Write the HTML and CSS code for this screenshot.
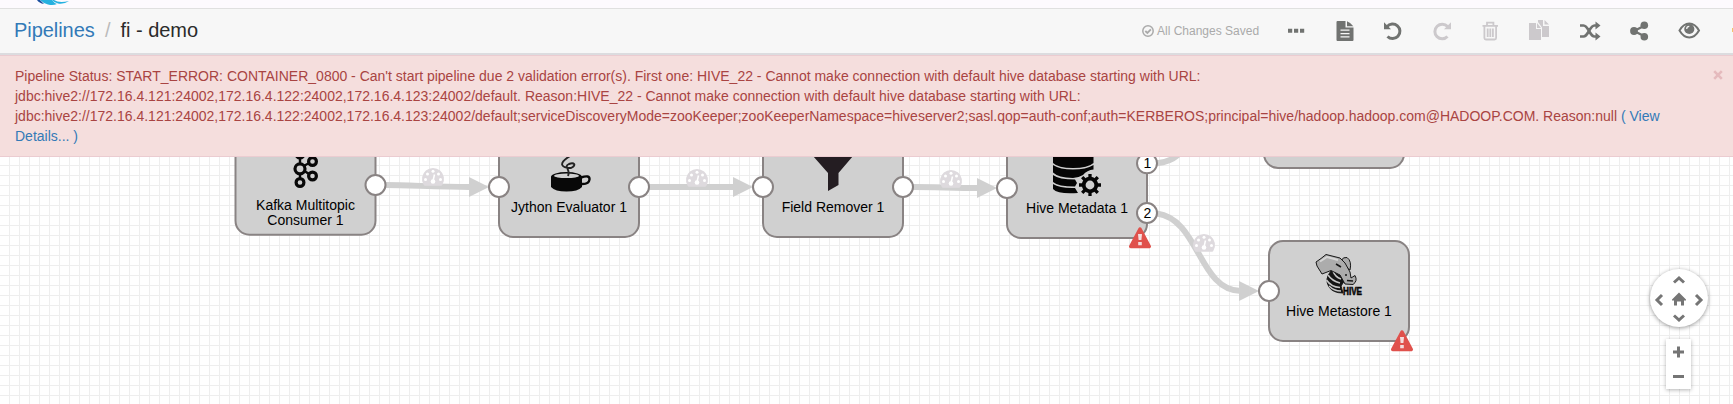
FILE: index.html
```html
<!DOCTYPE html>
<html lang="en">
<head>
<meta charset="utf-8">
<title>fi - demo</title>
<link rel="stylesheet" href="styles.css">
</head>
<body>
<div class="app">
  <div class="navbar">
    <svg class="logo" width="34" height="8" viewBox="0 0 34 8"><path d="M0 0H3L7 4Q2 3 0 0Z" fill="#1c4fa0"/><path d="M3 0H15Q17 3 20 4Q16 5.800 11 4.500Q6 3 3 0Z" fill="#25b1e0"/><path d="M17 0Q22 3.500 32 1Q27 4.500 21 3.500Q17 2.500 15 0Z" fill="#25b1e0"/></svg>
  </div>
  <header class="toolbar">
    <nav class="crumbs"><a>Pipelines</a><span class="slash">/</span><span>fi - demo</span></nav>
    <div class="saved">
      <svg width="12" height="12" viewBox="0 0 12 12" fill="none" stroke="#aaa" stroke-width="1.500"><circle cx="6" cy="6" r="5.200"/><path d="M3.300 6L5.400 8L8.900 4.400" stroke-width="1.900"/></svg>
      <span class="saved-text">All Changes Saved</span>
    </div>
    <div class="tools">
      <svg class="tool" viewBox="0 0 24 24"><path d="M4 9.800h4.200v4H4zM10 9.800h4.200v4H10zM16 9.800h4.200v4H16z"/></svg>
      <svg class="tool" viewBox="0 0 24 24"><path fill-rule="evenodd" d="M3.500 3q0-1 1-1h8v6.500h8V21q0 1-1 1h-15q-1 0-1-1zM7.500 10.500v1.300h9v-1.300zM7.500 13.900v1.300h9v-1.300zM7.500 17.300v1.300h9v-1.300z"/><path d="M14 2.200q4 1.500 6.300 5H14z"/></svg>
      <svg class="tool" viewBox="0 0 24 24"><path d="M6 7.600A7.300 7.300 0 1 1 6.500 17.500" fill="none" stroke="currentColor" stroke-width="3"/><path d="M3 3.300L3 10.300H10z"/></svg>
      <svg class="tool off" viewBox="0 0 24 24"><path d="M17.600 7.600A7.300 7.300 0 1 0 17.500 17.500" fill="none" stroke="currentColor" stroke-width="3"/><path d="M21 3.300L21 10.300H14z"/></svg>
      <svg class="tool off" viewBox="0 0 24 24"><path d="M4.500 6.800H20M9 6V3.700h6.400V6M6.400 7V19q0 1.500 1.500 1.500h8.700q1.500 0 1.500-1.500V7M9.700 9.500v8.500M12.300 9.500v8.500M14.900 9.500v8.500" fill="none" stroke="currentColor" stroke-width="1.800"/></svg>
      <svg class="tool off" viewBox="0 0 24 24"><path d="M2 4h7v6h5v11H2zM10 4l4 5h-4zM11 1h5v6h6v11h-7V8.500L11 3zM17.500 1l4.500 4.500h-4.500z"/></svg>
      <svg class="tool shuffle" viewBox="0 0 24 24"><path d="M2 6.500h3.500c5 0 6 11 11 11H19M2 17.500h3.500c5 0 6-11 11-11H19" fill="none" stroke="currentColor" stroke-width="2.700"/><path d="M17.500 2.500l5 4-5 4zM17.500 13.500l5 4-5 4z"/></svg>
      <svg class="tool" viewBox="0 0 24 24"><path d="M18 6.500L7 12L18 17.500" fill="none" stroke="currentColor" stroke-width="2.400"/><circle cx="17.300" cy="6.200" r="3.800"/><circle cx="7" cy="12" r="3.900"/><circle cx="17.300" cy="17.800" r="3.800"/></svg>
      <svg class="tool eye" viewBox="0 0 24 24"><path d="M2.500 11.600Q6.500 4.600 12.300 4.600T22 11.600Q18 18.600 12.300 18.600T2.500 11.600Z" fill="none" stroke="currentColor" stroke-width="2"/><circle cx="12.300" cy="10" r="5.100"/><path d="M9.700 10q0-2.600 2.600-2.600" fill="none" stroke="#f7f7f7" stroke-width="1.200"/></svg>
    </div>
  </header>
  <div class="edge-dot"></div>
  <div class="alert">
    <svg class="close" width="10" height="10" viewBox="0 0 10 10"><path d="M1.200 1.200L8.800 8.800M8.800 1.200L1.200 8.800" stroke="#e5babd" stroke-width="2.600"/></svg>
    <div>Pipeline Status: START_ERROR: CONTAINER_0800 - Can't start pipeline due 2 validation error(s). First one: HIVE_22 - Cannot make connection with default hive database starting with URL:</div>
    <div>jdbc:hive2://172.16.4.121:24002,172.16.4.122:24002,172.16.4.123:24002/default. Reason:HIVE_22 - Cannot make connection with default hive database starting with URL:</div>
    <div>jdbc:hive2://172.16.4.121:24002,172.16.4.122:24002,172.16.4.123:24002/default;serviceDiscoveryMode=zooKeeper;zooKeeperNamespace=hiveserver2;sasl.qop=auth-conf;auth=KERBEROS;principal=hive/hadoop.hadoop.com@HADOOP.COM. Reason:null <a>( View</a></div>
    <div><a>Details... )</a></div>
  </div>
  <main class="canvas">
    <svg class="graph" width="1733" height="247" viewBox="0 157 1733 247">
      <defs>
        <pattern id="grid" width="10" height="10" patternUnits="userSpaceOnUse"><path d="M9 0h1v10h-1zM0 5h10v1H0z" fill="#eee"/></pattern>
        <g id="gauge"><path d="M-9.500 7.500A11 11 0 1 1 9.500 7.500Q9 8.800 8 8.800H-8Q-9 8.800-9.500 7.500Z" fill="#dedade"/><g fill="#fff"><circle cx="-7.500" cy="2.500" r="1.500"/><circle cx="-5.500" cy="-3" r="1.500"/><circle cx="0" cy="-5.700" r="1.500"/><circle cx="5.500" cy="-3" r="1.500"/><circle cx="7.500" cy="2.500" r="1.500"/><circle cx="0" cy="4.500" r="2.300"/></g><path d="M0 4L1.500-2.500" stroke="#fff" stroke-width="1.500"/></g>
        <g id="warn"><path d="M0-8.500L9.300 9H-9.300Z" fill="#e0514c" stroke="#e0514c" stroke-width="3.500" stroke-linejoin="round"/><path d="M-2-3.500h4l-.6 6h-2.800zM-1.800 4.500h3.600v3.300h-3.600z" fill="#f3dede"/></g>
      </defs>
      <rect class="paper" x="0" y="157" width="1733" height="247"/>
      <rect x="0" y="157" width="1733" height="247" fill="url(#grid)"/>
      <g class="edge">
        <path d="M385 185C410 185 435 187 470 187"/><path d="M649 187H734"/><path d="M913 187C935 187 955 188 978 188"/>
        <path d="M1157 163.300C1166 162.500 1172 160 1178 155"/><path d="M1157 213.500C1199 219 1199 291 1241 291"/>
      </g>
      <g class="arrow"><path d="M469 177l20 10-20 10zM733 177l20 10-20 10zM977 178l20 10-20 10zM1239 281l20 10-20 10z"/></g>
      <use href="#gauge" x="433" y="177"/><use href="#gauge" x="697" y="178"/><use href="#gauge" x="951" y="179"/><use href="#gauge" x="1204" y="243"/>
      <g class="node">
        <rect x="235.500" y="134.700" width="140" height="100" rx="14"/><rect x="499" y="137" width="140" height="100" rx="14"/><rect x="763" y="137" width="140" height="100" rx="14"/><rect x="1007" y="138" width="140" height="100" rx="14"/><rect x="1264" y="68" width="140" height="100" rx="14"/><rect x="1269" y="241" width="140" height="100" rx="14"/>
      </g>
      <g fill="none" stroke="#080808" stroke-width="3.200">
        <path d="M300 156V182M300 168L312 161.500M300 168L312 176" stroke-width="2.400"/><g fill="#d0d0d0"><circle cx="300" cy="154" r="3.900"/><circle cx="300" cy="168.800" r="5"/><circle cx="300" cy="182.500" r="3.900"/><circle cx="312.500" cy="161.500" r="3.900"/><circle cx="312.500" cy="176" r="3.900"/></g>
      </g>
      <g fill="#080808">
        <ellipse cx="566.500" cy="177" rx="15.500" ry="5"/><path d="M551 176.500V187Q555 191.500 566.500 191.500T582 187V176.500Z"/><ellipse cx="566.500" cy="175.800" rx="12.500" ry="2.300" fill="#d0d0d0"/><path d="M581 177.500Q590 174.500 589.500 179.500Q589 184.500 581 184" fill="none" stroke="#080808" stroke-width="2.400"/>
        <path d="M570 156C557 164 562 168 571 168C577 165 574 162 569 164C563 167 571 169 568 176" fill="none" stroke="#222" stroke-width="1.900"/>
      </g>
      <path d="M813 156H853L838.500 173V185L828 191V173Z" fill="#241d22"/>
      <g fill="#050505">
        <path d="M1053 150H1093.500V163Q1088 168 1073 168T1053 163ZM1053 165Q1060 169.500 1073 169.500T1093.500 165V169.500Q1087 170 1083 175Q1078 178 1073 178Q1058 177.500 1053 172.500ZM1053 175Q1059 179.500 1075 179.500L1077 183L1075 186.500Q1058 186.500 1053 182ZM1053 184Q1060 188.500 1075 188L1078 193Q1058 194.500 1053 189Z"/>
        <g transform="translate(1090 185)"><circle r="6.300" fill="none" stroke="#050505" stroke-width="3.800"/><path d="M0-11V-7M0 11V7M-11 0H-7M11 0H7M-7.800-7.800L-5-5M7.800-7.800L5-5M-7.800 7.800L-5 5M7.800 7.800L5 5" stroke="#050505" stroke-width="3.300"/></g>
      </g>
      <g stroke="#171717" stroke-width="1" stroke-linejoin="round">
        <path d="M1331 271Q1324 279 1329 287Q1333 293 1343 293L1341 286L1345 280L1338 271Z" fill="#151515"/>
        <path d="M1328 275Q1332 281 1340 283M1326.500 280Q1331 287 1340 287.500M1329 286Q1334 291 1341 291M1333 271Q1335 277 1341 279" fill="none" stroke="#c6c6c6" stroke-width="1.500"/>
        <path d="M1341 261Q1343 256.500 1347 257.500Q1352 261 1350 270L1344 266Z" fill="#aaa"/>
        <path d="M1317 266L1316 262L1321 258.500L1326 254.500L1340 258L1345 263L1350 272L1351 278L1355 275.500Q1358 281 1353 284.500L1345 284L1340 275L1331 270.500L1322 274Z" fill="#acacac"/>
        <path d="M1320 261.500L1327 257L1338 260" fill="none" stroke="#d6d6d6" stroke-width="2"/><path d="M1336 264L1341 267M1345 275h2M1347 280.500L1353 281" fill="none" stroke-width="1.600"/>
      </g>
      <text class="hive" x="1343" y="295" textLength="19" lengthAdjust="spacingAndGlyphs">HIVE</text>
      <g class="port">
        <circle cx="375.500" cy="185" r="10"/><circle cx="499" cy="187" r="10"/><circle cx="639" cy="187" r="10"/><circle cx="763" cy="187" r="10"/><circle cx="903" cy="187" r="10"/><circle cx="1007" cy="188" r="10"/><circle cx="1147" cy="163.300" r="10"/><circle cx="1147" cy="213" r="10"/><circle cx="1269" cy="291" r="10"/>
      </g>
      <g class="label">
        <text x="305.500" y="210">Kafka Multitopic</text><text x="305.500" y="225">Consumer 1</text><text x="569" y="212">Jython Evaluator 1</text><text x="833" y="212">Field Remover 1</text><text x="1077" y="213">Hive Metadata 1</text><text x="1339" y="316">Hive Metastore 1</text><text x="1147.500" y="168">1</text><text x="1147.500" y="218">2</text>
      </g>
      <use href="#warn" x="1140" y="237.500"/><use href="#warn" x="1402" y="340.500"/>
    </svg>
    <div class="controls">
      <svg class="pan" width="58" height="58" viewBox="0 0 58 58"><g fill="none" stroke="#757575" stroke-width="3"><path d="M24 13.500L29 9L34 13.500M24 46.500L29 51L34 46.500M12 26L7 31L12 36M46 26L51 31L46 36"/></g><path d="M22 30.500L29 23.500L36 30.500V31.500H34V36.500H31V32.500H27V36.500H24V31.500H22Z" fill="#757575"/></svg>
      <svg class="zoom" width="25" height="50" viewBox="0 0 25 50" fill="#757575"><path d="M11 7.500h3v4h4v3h-4v4h-3v-4H7v-3h4zM7 36h11v3H7z"/></svg>
    </div>
  </main>
</div>
</body>
</html>
```
FILE: styles.css
```css
body { margin: 0; background: #fff; font-family: Arial, "Liberation Sans", sans-serif; font-size: 14px; }
.app { width: 1733px; height: 404px; overflow: hidden; display: flex; flex-direction: column; position: relative; }
.navbar { height: 8px; flex: none; background: #fdfafe; padding-left: 37px; display: flex; }
.toolbar { height: 44px; flex: none; background: #f7f7f7; border-top: 1px solid #e0e0e0; border-bottom: 2px solid #dcdcdf; display: flex; align-items: center; }
.crumbs { display: flex; width: 1127px; padding: 0 0 2px 14px; margin-right: 1px; font-size: 20px; letter-spacing: -.05px; line-height: 28px; color: #2b2b2b; }
a { color: #337ab7; }
.slash { color: #bbb; margin: 0 10.2px; }
.saved { display: flex; align-items: center; gap: 3px; width: 142px; color: #aaa; font-size: 12px; }
.saved-text { white-space: nowrap; }
.tools { display: flex; gap: 24.5px; color: #717371; padding-bottom: 1px; }
.tool { width: 24px; height: 24px; fill: currentColor; }
.shuffle { margin-left: 3px; }
.eye { margin-left: 2px; }
.off { color: #ccc9cc; }
.edge-dot { position: absolute; left: 1732px; top: 28px; width: 1px; height: 4px; background: #f4c26b; }
.alert { height: 80px; flex: none; position: relative; padding: 10px 15px; border-top: 1px solid #ebccd1; border-bottom: 1px solid #ebccd1; background: #f5dedd; color: #a94442; line-height: 20px; white-space: nowrap; }
.close { position: absolute; left: 1713px; top: 14px; }
.canvas { flex: none; height: 247px; position: relative; }
.graph { display: block; }
.paper { fill: #fff; }
.edge { fill: none; stroke: #d0d0d0; stroke-width: 6; }
.arrow { fill: #d0d0d0; }
.node { fill: #d0d0d0; stroke: #898383; stroke-width: 2; }
.port { fill: #fff; stroke: #898383; stroke-width: 2; }
.label { fill: #000; text-anchor: middle; font-size: 14px; }
.hive { font: bold 10px "Liberation Sans", sans-serif; stroke: #111; stroke-width: .6; }
.controls { position: absolute; left: 1650px; top: 112px; display: flex; flex-direction: column; align-items: flex-start; gap: 12px; }
.pan { border-radius: 50%; background: #fff; box-shadow: 0 1px 4px rgba(0,0,0,.4); }
.zoom { margin-left: 16px; background: #fff; box-shadow: 0 1px 4px rgba(0,0,0,.3); }
```
